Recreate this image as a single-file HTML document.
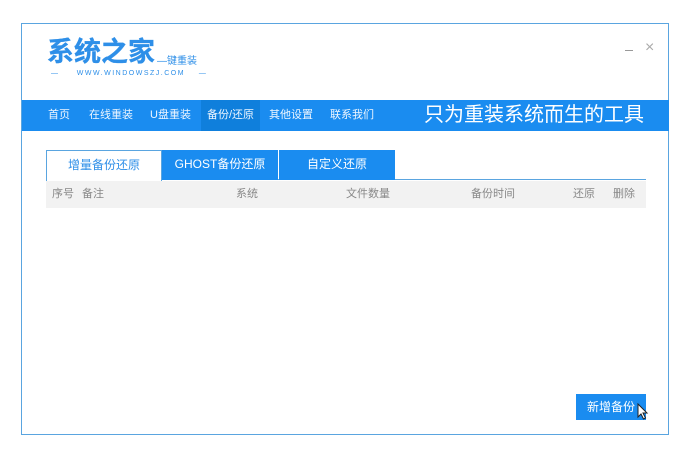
<!DOCTYPE html><html><head><meta charset="utf-8"><style>
body{margin:0;width:698px;height:463px;background:#fff;position:relative;overflow:hidden;font-family:"Liberation Sans","Noto Sans CJK SC",sans-serif}
.a{position:absolute}
.win{left:21px;top:23px;width:648px;height:412px;border:1px solid #5aa5e0;box-sizing:border-box}
.nav{left:22px;top:100px;width:647px;height:31px;background:#1a8cf0}
.nav span{position:absolute;top:0;line-height:31px;color:#eef6ff;font-size:11px}
.tab{top:150px;height:30px;line-height:29px;text-align:center;font-size:12px;color:#fff;background:#1a8cf0;box-sizing:border-box}
.hd span{position:absolute;top:0;line-height:27px;font-size:11px;color:#888}
</style></head><body>
<div class="a win"></div>
<div class="a" style="left:47px;top:35px;font-size:27px;line-height:34px;color:#2e8fe8;font-weight:bold;letter-spacing:0px;-webkit-text-stroke:0.3px #2e8fe8">系统之家</div>
<div class="a" style="left:157px;top:52px;font-size:10px;color:#2e8fe8;white-space:nowrap">—键重装</div>
<div class="a" style="left:51px;top:70px;font-size:7px;color:#2e8fe8;letter-spacing:1.5px;white-space:nowrap">—&nbsp;&nbsp;&nbsp;&nbsp; WWW.WINDOWSZJ.COM &nbsp;&nbsp;&nbsp;—</div>
<div class="a" style="left:625px;top:50px;width:8px;height:1px;background:#999"></div>
<div class="a" style="left:645px;top:40px;font-size:16px;color:#aaa;line-height:16px">×</div>
<div class="a nav">
<div class="a" style="left:179px;top:0;width:59px;height:31px;background:#0f7fdc"></div>
<span style="left:26px">首页</span><span style="left:67px">在线重装</span><span style="left:128px">U盘重装</span><span style="left:185px">备份/还原</span><span style="left:247px">其他设置</span><span style="left:308px">联系我们</span>
<span style="left:402px;font-size:20px;color:#fff;letter-spacing:0px">只为重装系统而生的工具</span>
</div>
<div class="a" style="left:46px;top:179px;width:600px;height:1px;background:#5aa5e0"></div>
<div class="a tab" style="left:46px;width:116px;background:#fff;color:#2e8fe8;border:1px solid #5aa5e0;border-bottom:none;height:31px">增量备份还原</div>
<div class="a tab" style="left:162px;width:116px">GHOST备份还原</div>
<div class="a tab" style="left:279px;width:116px">自定义还原</div>
<div class="a hd" style="left:46px;top:181px;width:600px;height:27px;background:#f2f2f2">
<span style="left:6px">序号</span><span style="left:36px">备注</span><span style="left:190px">系统</span><span style="left:300px">文件数量</span><span style="left:425px">备份时间</span><span style="left:527px">还原</span><span style="left:567px">删除</span>
</div>
<div class="a" style="left:576px;top:394px;width:70px;height:26px;background:#1a8cf0;color:#fff;font-size:12px;line-height:26px;text-align:center">新增备份</div>
<svg class="a" style="left:637px;top:403px" width="12" height="18" viewBox="0 0 12 18"><path d="M1 1 L1 14 L4 11 L6.5 16 L8.5 15 L6 10 L10 10 Z" fill="#fff" stroke="#222" stroke-width="1"/></svg>
</body></html>
